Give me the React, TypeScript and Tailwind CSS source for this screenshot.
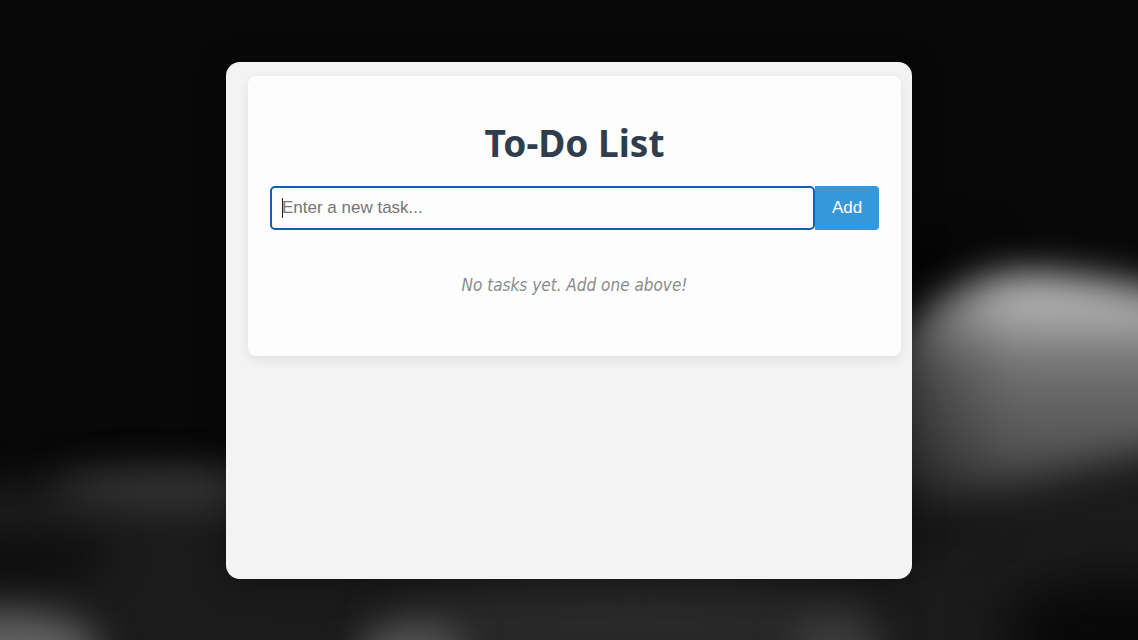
import { FormEvent, useState } from "react";

function Backdrop() {
  return (
    <svg
      aria-hidden="true"
      className="absolute inset-0 -z-10 h-full w-full"
      viewBox="0 0 1138 640"
      preserveAspectRatio="none"
    >
      <defs>
        <filter id="soft" x="-50%" y="-100%" width="200%" height="300%" colorInterpolationFilters="sRGB">
          <feGaussianBlur stdDeviation="18" />
        </filter>
        <filter id="wide" x="-50%" y="-100%" width="200%" height="300%" colorInterpolationFilters="sRGB">
          <feGaussianBlur stdDeviation="26" />
        </filter>
        <linearGradient id="hill" gradientUnits="userSpaceOnUse" x1="0" y1="260" x2="0" y2="510">
          <stop offset="0" stopColor="#c0c0c0" />
          <stop offset="0.2" stopColor="#acacac" />
          <stop offset="0.42" stopColor="#727272" />
          <stop offset="0.8" stopColor="#505050" />
          <stop offset="1" stopColor="#2c2c2c" />
        </linearGradient>
        <linearGradient id="shade" gradientUnits="userSpaceOnUse" x1="905" y1="0" x2="1010" y2="0">
          <stop offset="0" stopColor="#000" stopOpacity="0.42" />
          <stop offset="1" stopColor="#000" stopOpacity="0" />
        </linearGradient>
      </defs>
      <rect width="1138" height="640" fill="#080808" />
      <path d="M-60 495 Q120 455 240 480 L900 470 L1200 440 L1200 590 L900 720 L-60 720Z" fill="#1b1b1b" filter="url(#soft)" />
      <ellipse cx="185" cy="490" rx="130" ry="20" fill="#343434" filter="url(#soft)" />
      <ellipse cx="20" cy="558" rx="90" ry="20" fill="#0c0c0c" filter="url(#soft)" />
      <path d="M860 380 Q940 265 1040 273 Q1110 276 1200 302 L1200 445 Q1060 470 870 530Z" fill="url(#hill)" filter="url(#soft)" />
      <rect x="860" y="230" width="180" height="310" fill="url(#shade)" filter="url(#soft)" />
      <ellipse cx="1110" cy="630" rx="110" ry="50" fill="#080808" filter="url(#wide)" />
      <ellipse cx="10" cy="650" rx="90" ry="38" fill="#626262" filter="url(#soft)" />
      <ellipse cx="630" cy="625" rx="240" ry="45" fill="#2a2a2a" filter="url(#wide)" />
      <ellipse cx="412" cy="656" rx="55" ry="32" fill="#585858" filter="url(#soft)" />
      <ellipse cx="835" cy="650" rx="45" ry="36" fill="#3c3c3c" filter="url(#soft)" />
    </svg>
  );
}

export default function App() {
  const [tasks, setTasks] = useState<string[]>([]);
  const [draft, setDraft] = useState("");

  function addTask(event: FormEvent) {
    event.preventDefault();
    const text = draft.trim();
    if (!text) return;
    setTasks([...tasks, text]);
    setDraft("");
  }

  return (
    <div className="relative isolate flex min-h-screen justify-center overflow-hidden bg-[#080808] pt-[62px] pb-[61px] font-['DejaVu_Sans_Condensed','DejaVu_Sans',sans-serif]">
      <Backdrop />
      <main className="w-full max-w-[686px] rounded-[14px] bg-[#f3f3f3] pt-[14px] pr-[11px] pl-[22px] shadow-[0_4px_32px_rgba(0,0,0,0.35)]">
        <section className="rounded-lg bg-[#fdfdfd] px-[22px] pt-11 pb-[60px] shadow-[0_4px_12px_rgba(0,0,0,0.08)]">
          <h1 className="text-center font-['Noto_Sans',sans-serif] text-[37px] leading-[46px] font-bold text-[#2f3d4d]">
            To-Do List
          </h1>
          <form onSubmit={addTask} className="mt-5 flex h-11 font-['Liberation_Sans',sans-serif] text-[17px]">
            <div className="relative flex min-w-0 flex-1">
              <input
                type="text"
                aria-label="New task"
                placeholder="Enter a new task..."
                value={draft}
                onChange={(event) => setDraft(event.target.value)}
                className="peer w-full rounded-[5px] border-2 border-[#1060b8] bg-[#fdfdfd] px-[10px] text-[#333] outline-none placeholder:text-[#757575]"
              />
              <span className="pointer-events-none absolute top-3 left-3 h-5 w-px bg-[#222] peer-focus:hidden" />
            </div>
            <button type="submit" className="w-16 rounded-r bg-[#3498db] text-center text-white">
              Add
            </button>
          </form>
          {tasks.length === 0 ? (
            <p className="mt-11 text-center text-[17px] leading-[22px] text-[#888c8c] italic">No tasks yet. Add one above!</p>
          ) : (
            <ul className="mt-6">
              {tasks.map((task, index) => (
                <li key={index} className="border-b border-gray-200 py-3">{task}</li>
              ))}
            </ul>
          )}
        </section>
      </main>
    </div>
  );
}
